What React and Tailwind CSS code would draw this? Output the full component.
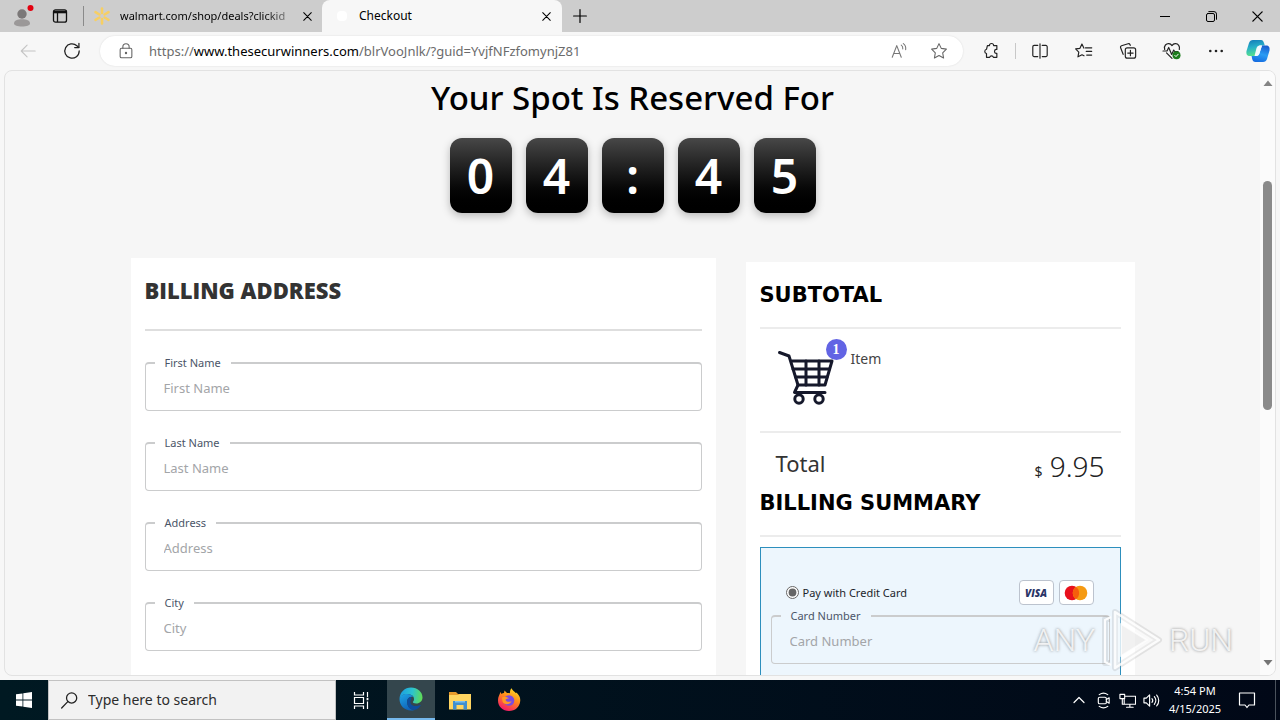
import React from "react";

const UI = "font-['Noto_Sans','Open_Sans',sans-serif]";

function Svg({ size = 18, label, children, className = "", stroke = "currentColor", sw = 1.2, vb = 20 }) {
  return (
    <svg
      width={size}
      height={size}
      viewBox={`0 0 ${vb} ${vb}`}
      fill="none"
      stroke={stroke}
      strokeWidth={sw}
      strokeLinecap="round"
      strokeLinejoin="round"
      role={label ? "img" : undefined}
      aria-hidden={label ? undefined : true}
      className={`block shrink-0 ${className}`}
    >
      {children}
    </svg>
  );
}

const Cross = ({ size = 10 }) => (
  <Svg size={size} vb={10} sw={1.2}>
    <path d="M0.8 0.8 9.2 9.2M9.2 0.8 0.8 9.2" />
  </Svg>
);

function IconButton({ label, className = "", children }) {
  return (
    <button type="button" aria-label={label} className={`flex shrink-0 items-center justify-center ${className}`}>
      {children}
    </button>
  );
}

function TabStrip() {
  return (
    <div className="flex h-8 shrink-0 items-stretch bg-[#cdcdcd] text-black">
      <IconButton label="Profile" className="w-11">
        <svg width="24" height="24" viewBox="0 0 24 24" aria-hidden="true">
          <circle cx="12" cy="10" r="4.7" fill="#7b7878" />
          <path d="M4 19.5c0-3 3.5-4.2 8-4.2s8 1.200 8 4.200c0 2-3.500 3-8 3s-8-1-8-3z" fill="#9b9898" />
          <circle cx="20.500" cy="4" r="3" fill="#e3000f" />
        </svg>
      </IconButton>
      <IconButton label="Tab actions" className="w-8">
        <svg width="16" height="16" viewBox="0 0 16 16" fill="none" stroke="#111" aria-hidden="true">
          <rect x="1.500" y="1.800" width="13" height="12.400" rx="2" strokeWidth="1.300" />
          <path d="M1.500 4h13" strokeWidth="2.600" />
          <path d="M5.500 4v10" strokeWidth="1.300" />
        </svg>
      </IconButton>
      <div className="ml-[7px] mt-1.5 h-5 w-px bg-[#8a8a8a]" />
      <div className="flex w-[237px] items-center pl-2 pr-1.5">
        <svg width="20" height="20" viewBox="0 0 20 20" stroke="#f7cf63" strokeWidth="2.600" strokeLinecap="round" aria-hidden="true">
          <path d="M10 2.500v4.500M10 13v4.500M3.500 6.200l3.900 2.300M12.600 11.500l3.900 2.300M3.500 13.800l3.900-2.300M12.600 8.500l3.900-2.300" />
        </svg>
        <span className="ml-2 flex-1 whitespace-nowrap text-[11px] leading-4 [mask-image:linear-gradient(to_right,black_84%,transparent_106%)]">
          walmart.com/shop/deals?clickid
        </span>
        <IconButton label="Close walmart.com tab" className="ml-2 h-4 w-4">
          <Cross size={9} />
        </IconButton>
      </div>
      <div className="ml-px flex w-60 items-center rounded-t-lg bg-[#f7f7f7] pl-3 pr-2">
        <div className="h-4 w-4 p-[3px]">
          <div className="h-full w-full rounded-sm bg-white" />
        </div>
        <span className="ml-[9px] flex-1 text-[12px] leading-4">Checkout</span>
        <IconButton label="Close Checkout tab" className="h-4 w-4">
          <Cross size={9} />
        </IconButton>
      </div>
      <IconButton label="New tab" className="w-9">
        <Svg size={14} vb={14} sw={1.200}>
          <path d="M7 0.600v12.800M0.600 7h12.800" />
        </Svg>
      </IconButton>
      <div className="flex-1" />
      <IconButton label="Minimize" className="w-[46px]">
        <Svg size={10} vb={10} sw={1}><path d="M0 5.500h10" /></Svg>
      </IconButton>
      <IconButton label="Restore" className="w-[46px]">
        <Svg size={11} vb={11} sw={1}>
          <rect x="0.500" y="2.500" width="8" height="8" rx="1.500" />
          <path d="M2.800 0.600h5.200a2.500 2.500 0 0 1 2.500 2.500v5.200" />
        </Svg>
      </IconButton>
      <IconButton label="Close" className="w-[46px]">
        <Cross size={11} />
      </IconButton>
    </div>
  );
}

function Toolbar() {
  return (
    <div className="flex h-[38px] shrink-0 items-center bg-[#f7f7f7] pr-1.5 text-[#222]">
      <IconButton label="Back" className="ml-2 w-10 text-[#c4c4c4]">
        <Svg size={18}><path d="M18 10H2.500M9 3.500 2.500 10 9 16.500" /></Svg>
      </IconButton>
      <IconButton label="Refresh" className="ml-1 mr-2 w-10">
        <Svg size={18} sw={1.400}>
          <path d="M18 10a8 8 0 1 1-2.600-5.900L17.500 6" />
          <path d="M17.700 1.500V6.200H13" />
        </Svg>
      </IconButton>
      <form className="flex h-[30px] flex-1 items-center rounded-full bg-white pl-[17px] pr-2 shadow-[0_0_2px_rgba(0,0,0,0.12)]" onSubmit={(e) => e.preventDefault()}>
        <Svg size={18} className="text-[#666]">
          <rect x="3.500" y="7" width="13" height="10.500" rx="1.500" />
          <path d="M6.500 7V5.500a3.500 3.500 0 0 1 7 0V7" />
          <circle cx="10" cy="12.200" r="0.700" fill="currentColor" />
        </Svg>
        <a href="https://www.thesecurwinners.com/blrVooJnlk/?guid=YvjfNFzfomynjZ81" className="ml-3.5 flex-1 whitespace-nowrap text-[13px] leading-5 text-[#6b6b6b]">
          https://<span className="text-black">www.thesecurwinners.com</span>/blrVooJnlk/?guid=YvjfNFzfomynjZ81
        </a>
        <IconButton label="Read aloud" className="w-8 text-[#777]">
          <Svg size={18}>
            <path d="M2.500 17 7.500 4l5 13M4.200 12.700h6.600M12.500 3.500c1.300.9 1.900 2.400 1.700 4.200M14.800 1.800c2 1.400 3 3.800 2.600 6.700" />
          </Svg>
        </IconButton>
        <IconButton label="Add to favorites" className="ml-2 w-8 text-[#666]">
          <Svg size={18}>
            <path d="m10 1.800 2.500 5.300 5.700.8-4.100 4.100 1 5.800L10 15l-5.100 2.800 1-5.800-4.100-4.100 5.700-.8z" />
          </Svg>
        </IconButton>
      </form>
      <IconButton label="Extensions" className="ml-3 w-8">
        <Svg size={18} sw={1.300}>
          <path d="M6 4h2.300a2.300 2.300 0 0 1 4.600 0H16.500v4.200h-.8a2.300 2.300 0 0 0 0 4.500h.8V17H12.700a2.200 2.200 0 0 0-4.200 0H5v-4.200a2.400 2.400 0 0 1 0-4.700z" />
        </Svg>
      </IconButton>
      <div className="mx-2 h-4 w-px bg-[#c8c8c8]" />
      <IconButton label="Split screen" className="w-8">
        <Svg size={18} sw={1.300}>
          <path d="M10 2v16M7.500 3.800H3.500A1.500 1.500 0 0 0 2 5.300v9.400a1.500 1.500 0 0 0 1.500 1.500h4M12.500 3.800h4A1.500 1.500 0 0 1 18 5.300v9.400a1.500 1.500 0 0 1-1.500 1.500h-4" />
        </Svg>
      </IconButton>
      <IconButton label="Favorites" className="ml-3 w-8">
        <Svg size={18} sw={1.300}>
          <path d="M11.600 6.500h7M12.500 10.500h6M13 14.500h5.500" />
          <path d="M9.800 6.800 7.700 2.300 5.500 7l-4.800.7 3.500 3.500-.9 5.300L7.800 14.200l2.200 1.100" />
        </Svg>
      </IconButton>
      <IconButton label="Collections" className="ml-3 w-8">
        <Svg size={18} sw={1.300}>
          <rect x="7" y="6.500" width="11.500" height="11.500" rx="2.200" />
          <path d="M12.700 9.300v6M9.700 12.300h6M4.600 13.700l-2.800-7.300c-.4-1 .1-1.900 1-2.200l7.300-2.300c1-.3 1.800.2 2.200 1.100l.2.800" />
        </Svg>
      </IconButton>
      <IconButton label="Browser essentials" className="ml-3 w-8">
        <Svg size={20} sw={1.200}>
          <path d="M2.700 8.500C1.500 4.500 4.500 2.500 6.800 2.700c1.500.1 2.500.9 3.200 1.900.7-1 1.800-1.800 3.200-1.900 3-.2 5 2.500 4.100 5.800M4.500 11.800l5.500 5.500M1 10h4l1.700-3.500 3 7 2-4.500 1 1.500H16" />
          <circle cx="14.500" cy="14.300" r="4" fill="#1c7c1c" stroke="none" />
          <path d="m12.800 14.400 1.200 1.200 2.200-2.400" stroke="#fff" strokeWidth="1" />
        </Svg>
      </IconButton>
      <IconButton label="Settings and more" className="ml-3 w-8">
        <svg width="16" height="16" viewBox="0 0 16 16" fill="#222" aria-hidden="true">
          <circle cx="2.300" cy="8" r="1.300" /><circle cx="8" cy="8" r="1.300" /><circle cx="13.700" cy="8" r="1.300" />
        </svg>
      </IconButton>
      <IconButton label="Copilot" className="ml-2.5 w-8">
        <svg width="24" height="24" viewBox="0 0 24 24" aria-hidden="true">
          <defs>
            <linearGradient id="cpa" x1="0" y1="0" x2="0.200" y2="1">
              <stop offset="0" stopColor="#1479b8" /><stop offset="0.500" stopColor="#28b0c8" /><stop offset="1" stopColor="#55e08f" />
            </linearGradient>
            <linearGradient id="cpb" x1="0.600" y1="0" x2="0.300" y2="1">
              <stop offset="0" stopColor="#1a5fd0" /><stop offset="0.500" stopColor="#2a9cf4" /><stop offset="1" stopColor="#156be0" />
            </linearGradient>
          </defs>
          <path d="M7 1h8c2 0 2.500 1.500 3 3l.8 2.500H14c-2 0-3 1-3.600 3L8.500 17H4C1 17 0 15 .5 12L3 4c.7-2 2-3 4-3z" fill="url(#cpa)" />
          <path d="M17 23H9.500c-2 0-2.800-1-3.300-3L5.600 17H10c2 0 3-1 3.600-3L16 6.500h4c3 0 4 2 3.500 5L21 20c-.7 2-2 3-4 3z" fill="url(#cpb)" />
          <path d="M11.800 8.500c.6-1.400 1.300-2 2.900-2H16l-2.600 8c-.5 1.600-1.400 2.500-3 2.500H9.200z" fill="#f3faff" />
        </svg>
      </IconButton>
    </div>
  );
}

function Field({ id, label }) {
  return (
    <fieldset className="min-w-0 rounded border border-t-2 border-[#cbcccd] pb-1.5">
      <legend className="ml-[9px] px-2.5 text-[11px] leading-[18px] text-[#4b5568]">
        <label htmlFor={id}>{label}</label>
      </legend>
      <input
        id={id}
        placeholder={label}
        className="block h-8 w-full bg-transparent px-[18px] text-[13px] leading-8 outline-none placeholder:text-[#a3a5a8]"
      />
    </fieldset>
  );
}

function Countdown() {
  return (
    <div className="flex justify-center gap-3.5" role="timer">
      {["0", "4", ":", "4", "5"].map((c, i) => (
        <div
          key={i}
          className="flex h-[75px] w-[62px] items-center justify-center rounded-xl bg-linear-to-b from-[#484848] to-black text-[48px] leading-none font-semibold text-white shadow-[0_3px_8px_rgba(0,0,0,0.25)]"
        >
          {c}
        </div>
      ))}
    </div>
  );
}

function Cart() {
  return (
    <svg width="58" height="58" viewBox="0 0 58 58" fill="none" stroke="#15182b" strokeWidth="3" strokeLinecap="round" strokeLinejoin="round" aria-hidden="true">
      <path d="M2.500 3.500 12 7l9 29h27l7-24H14" />
      <path d="M16 20h36.500M18.500 28h31.500M29 12v24M42 12v24" strokeWidth="3" />
      <path d="M21 36 17.500 43.500H48" />
      <circle cx="22" cy="50" r="4.200" /><circle cx="42" cy="50" r="4.200" />
    </svg>
  );
}

function SummaryTitle({ children }) {
  return (
    <>
      <h2 className="font-['DejaVu_Sans',Verdana,sans-serif] text-[21px] leading-8 font-bold text-black">{children}</h2>
      <hr className="mt-4 border-t-2 border-[#ececec]" />
    </>
  );
}

function Checkout() {
  return (
    <main className="min-w-0 flex-1 overflow-hidden">
      <h1 className="pt-0.5 text-center text-[33px] leading-[50px] font-medium text-black">Your Spot Is Reserved For</h1>
      <div className="mt-[15px]">
        <Countdown />
      </div>
      <div className="mx-auto mt-[45px] grid max-w-[1004px] grid-cols-[585fr_389fr] items-start gap-[30px]">
        <section className="bg-white px-3.5 pt-4 pb-6">
          <h2 className="font-['Open_Sans',sans-serif] text-[22px] leading-8 font-extrabold text-[#333]">BILLING ADDRESS</h2>
          <hr className="mt-[23px] border-t-2 border-[#dedede]" />
          <form className="mt-[23px] flex flex-col gap-[23px]">
            <Field id="first-name" label="First Name" />
            <Field id="last-name" label="Last Name" />
            <Field id="address" label="Address" />
            <Field id="city" label="City" />
          </form>
        </section>
        <section className="mt-1 bg-white px-3.5 pt-[17px] pb-6">
          <SummaryTitle>SUBTOTAL</SummaryTitle>
          <div className="flex h-[102px] items-start pt-5 pl-[17px]">
            <div className="relative">
              <Cart />
              <span className="absolute -top-2.5 -right-3 flex h-[21px] w-[21px] items-center justify-center rounded-full bg-[#6264e4] font-['Liberation_Serif',serif] text-[14px] leading-none font-bold text-white">
                1
              </span>
            </div>
            <span className="ml-4 text-[14px] leading-5 text-[#444]">Item</span>
          </div>
          <hr className="border-t-2 border-[#ececec]" />
          <div className="flex h-[54px] items-start justify-between px-4 text-[#333]">
            <span className="pt-3.5 text-[22px] leading-8">Total</span>
            <span className="pt-[17px] text-[28px] leading-8 font-light text-[#222]">
              <span className="text-[14px] font-normal">$</span> 9.95
            </span>
          </div>
          <SummaryTitle>BILLING SUMMARY</SummaryTitle>
          <div className="mt-2.5 border border-[#2d8fbd] bg-[#edf6fd] px-2.5 pt-8 pb-10">
            <div className="flex h-[25px] items-center pr-4 pl-[15px]">
              <input id="pay-card" type="radio" name="pay" defaultChecked className="m-0 h-[13px] w-[13px] accent-[#666]" />
              <label htmlFor="pay-card" className="ml-1 flex-1 text-[11px] leading-4 whitespace-nowrap text-[#1c1f2b]">
                Pay with Credit Card
              </label>
              <span className="flex h-[25px] w-[35px] items-center justify-center rounded border border-[#bcc3ce] bg-white font-['Open_Sans',sans-serif] text-[10px] leading-none font-extrabold text-[#2a3567] italic">
                VISA
              </span>
              <span className="ml-[5px] flex h-[25px] w-[35px] items-center justify-center rounded border border-[#bcc3ce] bg-white">
                <svg width="24" height="16" viewBox="0 0 24 16" role="img" aria-label="Mastercard">
                  <circle cx="8" cy="8" r="7.300" fill="#e8101c" /><circle cx="16" cy="8" r="7.300" fill="#f59a12" />
                  <path d="M12 2a7.300 7.300 0 0 1 0 12 7.300 7.300 0 0 1 0-12z" fill="#f65d0c" />
                </svg>
              </span>
            </div>
            <div className="mt-0.5">
              <Field id="card-number" label="Card Number" />
            </div>
          </div>
        </section>
      </div>
    </main>
  );
}

function Scrollbar() {
  return (
    <div className="flex w-[15px] shrink-0 flex-col items-center bg-[#fbfbfb] py-2" aria-hidden="true">
      <svg width="10" height="8" viewBox="0 0 10 8" fill="#858585"><path d="M5 1.500 9.500 7h-9z" /></svg>
      <div className="h-[16%]" />
      <div className="h-[229px] w-[9px] rounded-full bg-[#8b8b8b]" />
      <div className="flex-1" />
      <svg width="10" height="8" viewBox="0 0 10 8" fill="#757575"><path d="M5 6.500 9.500 1h-9z" /></svg>
    </div>
  );
}

function Watermark() {
  const text = "font-['Liberation_Sans_Narrow','Roboto',sans-serif] text-[32px] leading-none font-light text-white/80 [text-shadow:0_0_3px_rgba(110,110,110,0.8)]";
  return (
    <div className="pointer-events-none absolute right-[42px] bottom-0.5 flex items-center gap-1.5">
      <span className={text}>ANY</span>
      <svg width="62" height="66" viewBox="0 0 62 66" fill="none" strokeLinejoin="round" aria-hidden="true">
        <g stroke="#8f8f8f" strokeOpacity="0.200" strokeWidth="6">
          <path d="M14 5 58 33 14 61z" /><path d="M9 12H4v44h5" />
        </g>
        <path d="M14 5 58 33 14 61z" fill="#ffffff" fillOpacity="0.300" stroke="#fff" strokeOpacity="0.850" strokeWidth="2.500" />
        <path d="M20 17 46 33 20 49z" stroke="#fff" strokeOpacity="0.700" strokeWidth="2" fill="#ddd" fillOpacity="0.400" />
        <path d="M10 10 4 13v42l6 3" stroke="#fff" strokeOpacity="0.900" strokeWidth="2" />
      </svg>
      <span className={text}>RUN</span>
    </div>
  );
}

function Taskbar() {
  return (
    <footer className="flex h-10 shrink-0 items-stretch bg-linear-to-r from-[#001922] to-[#010817] text-white">
      <IconButton label="Start" className="w-12">
        <svg width="16" height="16" viewBox="0 0 16 16" fill="#fff" aria-hidden="true">
          <path d="M0 2.300 6.500 1.400v6.200H0zM7.300 1.300 16 0v7.600H7.300zM0 8.400h6.500v6.200L0 13.700zM7.300 8.400H16V16l-8.700-1.300z" />
        </svg>
      </IconButton>
      <div className="flex w-72 items-center border border-[#c2c2c2] bg-[#f2f2f2] pl-3 text-[#222]">
        <Svg size={17} sw={1.500}>
          <circle cx="12.500" cy="7" r="6" /><path d="M8 11.300 0.800 18.800" />
        </Svg>
        <input aria-label="Search" placeholder="Type here to search" className="ml-2.5 min-w-0 flex-1 bg-transparent text-[14px] leading-5 outline-none placeholder:text-[#2c2c2c]" />
      </div>
      <IconButton label="Task view" className="w-[51px]">
        <svg width="17" height="17" viewBox="0 0 17 17" fill="none" stroke="#fff" strokeWidth="1.200" aria-hidden="true">
          <path d="M1.500 0v3h9V0M1.500 17v-3h9v3M1.500 5.500h9v6h-9zM14.500 0v5M14.500 9.500V17" />
          <rect x="13.600" y="5.800" width="1.800" height="2.400" fill="#fff" stroke="none" />
        </svg>
      </IconButton>
      <IconButton label="Microsoft Edge" className="w-12 border-b-2 border-[#76b9ed] bg-[#34464d]">
        <svg width="24" height="24" viewBox="0 0 24 24" aria-hidden="true">
          <defs>
            <linearGradient id="eg1" x1="0" y1="0.300" x2="1" y2="0.400">
              <stop offset="0" stopColor="#1b9de2" /><stop offset="0.550" stopColor="#2cc3cf" /><stop offset="1" stopColor="#5fdc56" />
            </linearGradient>
            <linearGradient id="eg2" x1="0" y1="0" x2="0.500" y2="1">
              <stop offset="0" stopColor="#1ea6e6" /><stop offset="1" stopColor="#0f62b8" />
            </linearGradient>
          </defs>
          <path d="M0.500 12C0.800 5 5.800 0.500 12 0.500 18.500 0.500 23.500 5 23.500 10.500c0 3.500-2.800 6-6.300 6-2.300 0-3.700-.9-3.300-1.700.9-1 1.100-2 1.100-2.900C15 8.500 11.500 7 8 7c-4 0-6.500 2.300-7.500 5z" fill="url(#eg1)" />
          <path d="M0.500 12C1.200 9 4 7 8 7c3.500 0 5.500 1.400 6.400 3C9.500 9 7.800 12.500 8.200 16c.4 4 3.300 7 7.300 7-1.100.4-2.300.5-3.500.5C5.500 23.500 0.500 18.500 0.500 12z" fill="url(#eg2)" />
          <path d="M8.200 16c-.4-3 .8-5.500 3.300-6 1 .4 1.200 1.500.5 2.500-2.500 4.500 2.500 8 7.500 6 1.200-.5 2.400-.9 2.300-.3-1.200 2.100-3.300 4-6.300 4.800-4-.1-6.900-3-7.300-7z" fill="#0d4d9d" />
        </svg>
      </IconButton>
      <IconButton label="File Explorer" className="w-[49px]">
        <svg width="22" height="19" viewBox="0 0 22 19" aria-hidden="true">
          <path d="M0 1h7l2 2h12v5H0z" fill="#e89b2c" />
          <path d="M0 4h9l1.500-1H22v15.500H0z" fill="#ffd561" />
          <path d="M4 10h14v8.500h-3.500V14h-7v4.500H4z" fill="#3f8fd0" />
          <path d="M6 10h10v1.500H6z" fill="#7cc0ef" />
        </svg>
      </IconButton>
      <IconButton label="Firefox" className="w-[49px]">
        <svg width="24" height="24" viewBox="0 0 24 24" aria-hidden="true">
          <defs>
            <linearGradient id="ff" x1="0.800" y1="0" x2="0.300" y2="1">
              <stop offset="0" stopColor="#ffe226" /><stop offset="0.450" stopColor="#ff8a1c" /><stop offset="1" stopColor="#f5156c" />
            </linearGradient>
          </defs>
          <path d="M2.500 6.500 3.500 4l1 2c.6-.5 1.500-.9 2.500-1L7.500 2.500 10 5c1-.1 2 0 3 .3-.3-2 .5-4 1.500-5 1 2.200 3 3.200 4.500 5l.5-.8C22.500 7.500 23.500 10 23.200 13c-.5 6-5 10-11.200 10S1 18.500 1 12.500c0-2.200.6-4.200 1.500-6z" fill="url(#ff)" />
          <circle cx="12" cy="12.500" r="5.300" fill="#7a4be0" />
          <path d="M5 9.500c3-1.500 5-.5 7 1-2 0-3 .5-3.500 1.500 1 2 4 2.500 6 1-1 4-7.500 4.500-9 .5z" fill="#ff9a24" />
        </svg>
      </IconButton>
      <div className="flex-1" />
      <IconButton label="Show hidden icons" className="w-6">
        <Svg size={12} vb={12} sw={1.200}><path d="M1 8.500 6 3.500l5 5" /></Svg>
      </IconButton>
      <IconButton label="Meet now" className="w-6">
        <Svg size={17} vb={18} sw={1.200}>
          <rect x="3.500" y="5.500" width="8.500" height="7" rx="1.500" />
          <path d="m12 8 3-1.800v5.600L12 10M4.500 2.800c2.700-2 6.300-2 9 0M4.500 15.200c2.700 2 6.300 2 9 0" />
        </Svg>
      </IconButton>
      <IconButton label="Network" className="w-6">
        <Svg size={17} vb={18} sw={1.200}>
          <path d="M6.500 4.500h11v8.500h-12V8M11.500 13v3M8 16.200h7M1 2.500h5v4.500H1zM3.500 7v6h2" />
        </Svg>
      </IconButton>
      <IconButton label="Volume" className="w-6">
        <Svg size={17} vb={18} sw={1.200}>
          <path d="M1 6.500h2.500L7 3v12l-3.500-3.500H1zM9.500 7c1 1.200 1 2.800 0 4M12 5c2 2.400 2 5.600 0 8M14.500 3.200c2.900 3.400 2.900 8.200 0 11.600" />
        </Svg>
      </IconButton>
      <div className="ml-1 flex w-[56px] flex-col items-center justify-center whitespace-nowrap text-[11px] leading-[18px]">
        <span>4:54 PM</span>
        <span>4/15/2025</span>
      </div>
      <IconButton label="Notifications" className="ml-1 w-10">
        <Svg size={18} vb={18} sw={1.200}><path d="M1.500 2h15v12H11l-2 2.500L7 14H1.500z" /></Svg>
      </IconButton>
      <div className="mr-1 ml-2 w-px bg-[#4a525c]" />
    </footer>
  );
}

export default function App() {
  return (
    <div className={`flex h-screen flex-col overflow-hidden bg-[#f7f7f7] ${UI}`}>
      <TabStrip />
      <Toolbar />
      <div className="relative mx-1 mb-1 flex min-h-0 flex-1 overflow-hidden rounded-lg border border-[#e2e2e2] bg-[#f6f6f6]">
        <Checkout />
        <Scrollbar />
        <Watermark />
      </div>
      <Taskbar />
    </div>
  );
}
